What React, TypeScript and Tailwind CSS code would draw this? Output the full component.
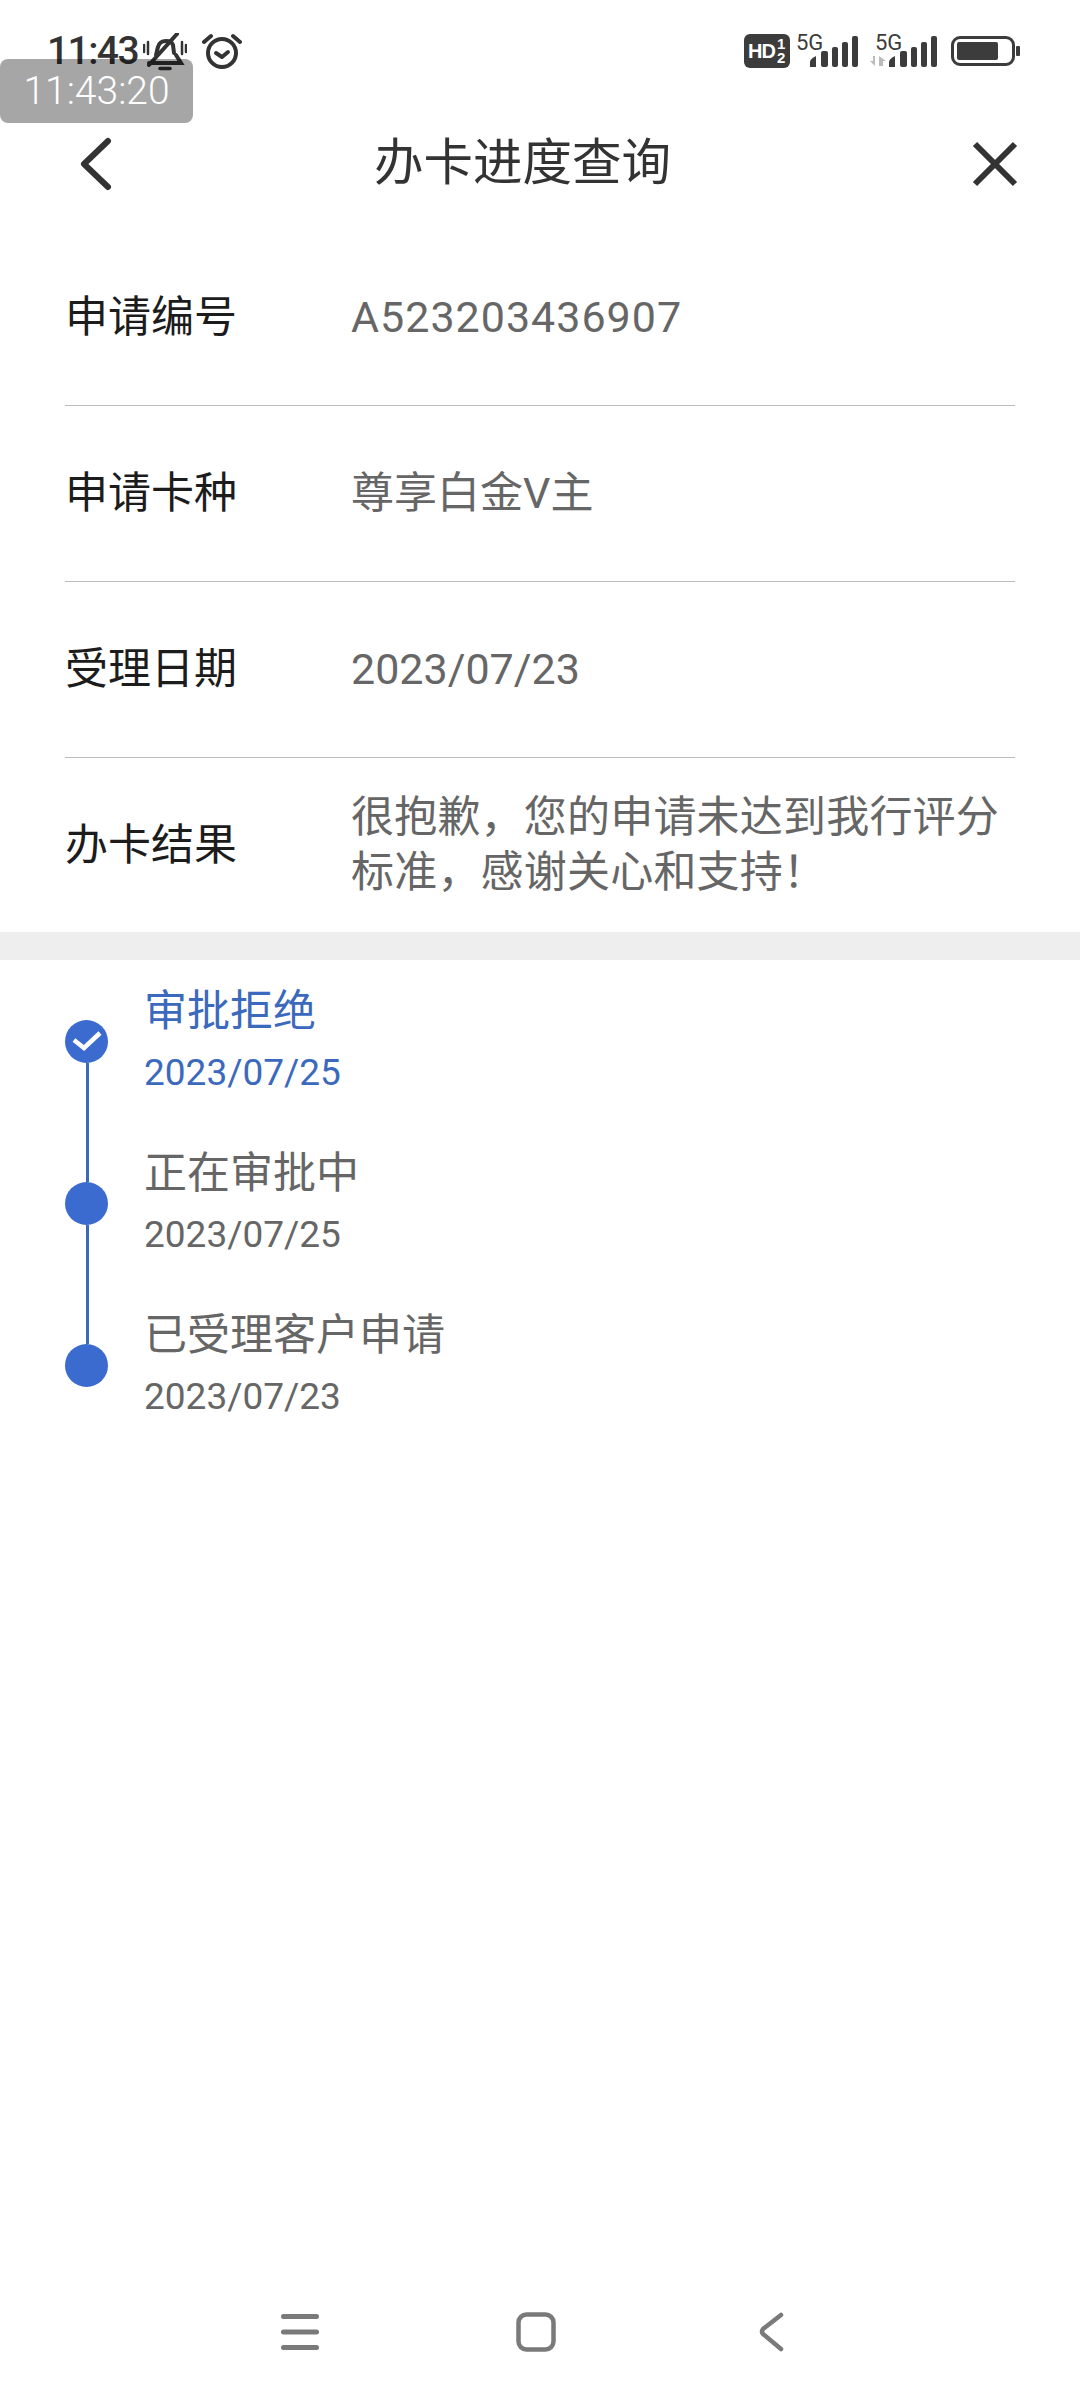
const cjk = "font-['Roboto','Noto_Sans_CJK_SC',sans-serif]";

const rows = [
  { label: "申请编号", value: "A523203436907", spacing: "tracking-[1px]" },
  { label: "申请卡种", value: "尊享白金V主", spacing: "" },
  { label: "受理日期", value: "2023/07/23", spacing: "" },
];

const steps = [
  { title: "审批拒绝", date: "2023/07/25", done: true },
  { title: "正在审批中", date: "2023/07/25", done: false },
  { title: "已受理客户申请", date: "2023/07/23", done: false },
];

const Signal = () => (
  <svg width="48" height="32" viewBox="0 0 48 32" fill="#3c3c3c">
    <path d="M0 31v-5q0-3 6-6v11z" />
    <rect x="11" y="15" width="7" height="16" rx="2" />
    <rect x="22" y="11" width="6" height="20" rx="2" />
    <rect x="32" y="6" width="6" height="25" rx="2" />
    <rect x="42" y="0" width="6" height="31" rx="2" />
  </svg>
);

const StatusBar = () => (
  <div className="h-[97px] flex items-start pt-[33px] relative">
    <div className="ml-[47px] w-[96px] text-[39px] leading-[36px] text-[#333] tracking-[-1.6px] font-medium">11:43</div>
    <svg width="44" height="38" viewBox="0 0 44 38" fill="none" stroke="#333" strokeWidth="4" strokeLinecap="round">
      <path d="M13 22c1-3 1-5 2-8 1-4 4-6 8-6 3 0 6 1 7 4l1 8" />
      <path d="M6 30h32l-5-8" />
      <path d="M6 32L34 1" />
      <path d="M17 35.500h10" strokeWidth="3.500" />
      <path d="M1 12v7M5 9v12M39 9v12M43 12v7" strokeWidth="2.500" />
    </svg>
    <svg className="ml-[15px]" width="40" height="36" viewBox="0 0 40 36" fill="none" stroke="#333" strokeWidth="4" strokeLinecap="round">
      <circle cx="20" cy="20" r="14" />
      <path d="M14 20l6 4 6-5" strokeLinejoin="round" />
      <path d="M2 9l7-6M38 9l-7-6" />
    </svg>
    <div className="ml-auto mr-[60px] flex items-start">
      <div className="w-[46px] h-[34px] mt-px bg-[#3c3c3c] rounded-[6px] flex items-center pl-[4px] text-white font-bold font-['Liberation_Sans',sans-serif]">
        <span className="text-[20px] leading-none tracking-[-1px]">HD</span>
        <span className="flex flex-col items-center text-[15px] leading-[14px] ml-[2px]">
          <span>1</span>
          <span>2</span>
        </span>
      </div>
      <div className="relative w-[74px] h-[36px] ml-[6px]">
        <span className="absolute left-0 -top-[2px] text-[22px] leading-[24px] text-[#3c3c3c]">5G</span>
        <div className="absolute left-[14px] top-[3px]"><Signal /></div>
      </div>
      <div className="relative w-[72px] h-[36px]">
        <span className="absolute left-[5px] -top-[2px] text-[22px] leading-[24px] text-[#3c3c3c]">5G</span>
        <svg className="absolute left-0 top-[22px]" width="16" height="12" viewBox="0 0 16 12" fill="#bbb">
          <path d="M0 6h3V1h2v10zM9 11V1l7 5h-3v5z" />
        </svg>
        <div className="absolute left-[19px] top-[3px]"><Signal /></div>
      </div>
      <div className="flex items-center ml-[9px] mt-[3px]">
        <div className="w-[64px] h-[30px] border-[3px] border-[#3c3c3c] rounded-[9px] p-[3px]">
          <div className="w-[41px] h-full bg-[#3c3c3c] rounded-[2px]" />
        </div>
        <div className="w-[4px] h-[10px] ml-px bg-[#3c3c3c] rounded-[1px]" />
      </div>
    </div>
    <div className="absolute left-0 top-[59px] w-[193px] h-[64px] bg-black/35 rounded-[8px] flex items-center justify-center text-white text-[39px] font-light leading-none">
      11:43:20
    </div>
  </div>
);

const Header = () => (
  <div className="h-[133px] flex items-center justify-between pl-[79px] pr-[62px] relative">
    <svg width="34" height="54" viewBox="0 0 34 54" fill="none" stroke="#333" strokeWidth="6" strokeLinecap="round" strokeLinejoin="round">
      <path d="M29 4L5 27l24 23" />
    </svg>
    <div className="text-[49.500px] leading-none text-[#333] absolute left-[374px]">办卡进度查询</div>
    <svg width="46" height="46" viewBox="0 0 46 46" fill="none" stroke="#333" strokeWidth="6">
      <path d="M3 3l40 40M43 3L3 43" />
    </svg>
  </div>
);

const NavBar = () => (
  <div className="mt-auto h-[136px] flex items-center pl-[281px]">
    <svg width="38" height="36" viewBox="0 0 38 36" fill="none" stroke="#7a7a7a" strokeWidth="5" strokeLinecap="round">
      <path d="M2.500 2.500h33M2.500 18h33M2.500 33.500h33" />
    </svg>
    <svg className="ml-[197px]" width="40" height="40" viewBox="0 0 40 40" fill="none" stroke="#7a7a7a" strokeWidth="4.500">
      <rect x="2.500" y="2.500" width="35" height="35" rx="8" />
    </svg>
    <svg className="ml-[203px]" width="25" height="40" viewBox="0 0 25 40" fill="none" stroke="#7a7a7a" strokeWidth="4.500" strokeLinecap="round" strokeLinejoin="round">
      <path d="M22 3L4 17q-2 3 0 5l18 15" />
    </svg>
  </div>
);

export default function App() {
  return (
    <div className={`w-[1080px] h-[2400px] bg-white flex flex-col ${cjk}`}>
      <StatusBar />
      <Header />

      <div className="px-[65px]">
        {rows.map((row) => (
          <div key={row.label} className="h-[176px] flex items-center border-b border-[#bdbdbd]">
            <div className="w-[286px] text-[43px] text-[#1c1c1c] leading-none">{row.label}</div>
            <div className={`text-[43px] text-[#666] leading-none ${row.spacing}`}>{row.value}</div>
          </div>
        ))}
        <div className="h-[174px] flex items-center">
          <div className="w-[286px] text-[43px] text-[#1c1c1c] leading-none">办卡结果</div>
          <div className="w-[660px] text-[43px] text-[#666] leading-[55px] tracking-[0.2px]">
            很抱歉，您的申请未达到我行评分标准，感谢关心和支持！
          </div>
        </div>
      </div>

      <div className="h-[28px] bg-[#eeeeee]" />

      <div className="pl-[65px]">
        {steps.map((step, index) => (
          <div key={step.title} className="h-[162px] flex items-center">
            <div className="w-[43px] self-stretch flex flex-col items-center">
              <div className={`w-[3px] flex-1 translate-x-px ${index > 0 ? "bg-[#3a69b5]" : ""}`} />
              <div className="w-[43px] h-[43px] rounded-full bg-[#3b6bcf] flex items-center justify-center">
                {step.done && (
                  <svg width="30" height="22" viewBox="0 0 30 22" fill="none" stroke="#fff" strokeWidth="4.500">
                    <path d="M2 10l10 8L28 3" />
                  </svg>
                )}
              </div>
              <div className={`w-[3px] flex-1 translate-x-px ${index < steps.length - 1 ? "bg-[#3a69b5]" : ""}`} />
            </div>
            <div className={`ml-[36px] pt-[2px] ${step.done ? "text-[#3b69bd]" : "text-[#666]"}`}>
              <div className="text-[43px] leading-[62px]">{step.title}</div>
              <div className="text-[37px] leading-[62px]">{step.date}</div>
            </div>
          </div>
        ))}
      </div>

      <NavBar />
    </div>
  );
}
